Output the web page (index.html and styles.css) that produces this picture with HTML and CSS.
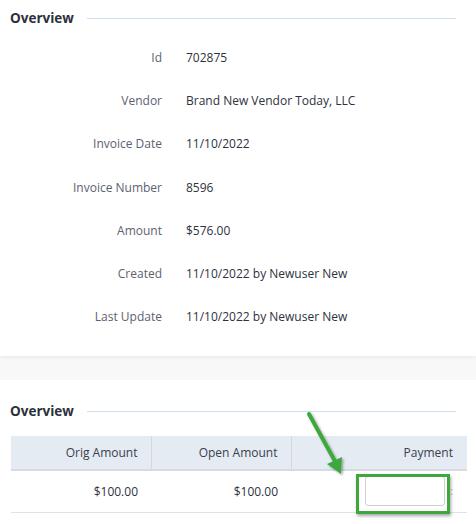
FILE: index.html
```html
<!DOCTYPE html>
<html>
<head>
<meta charset="utf-8">
<link rel="stylesheet" href="styles.css">
</head>
<body>
<div class="panel">
  <div class="section-title"><span>Overview</span><span class="rule"></span></div>
  <div class="details">
    <div class="label">Id</div><div class="value">702875</div>
    <div class="label">Vendor</div><div class="value">Brand New Vendor Today, LLC</div>
    <div class="label">Invoice Date</div><div class="value">11/10/2022</div>
    <div class="label">Invoice Number</div><div class="value">8596</div>
    <div class="label">Amount</div><div class="value">$576.00</div>
    <div class="label">Created</div><div class="value">11/10/2022 by Newuser New</div>
    <div class="label">Last Update</div><div class="value">11/10/2022 by Newuser New</div>
  </div>
</div>
<div class="band"></div>
<div class="lower">
  <div class="section-title"><span>Overview</span><span class="rule"></span></div>
  <table class="grid">
    <thead>
      <tr><th class="c1">Orig Amount</th><th class="c2">Open Amount</th><th class="c3">Payment</th></tr>
    </thead>
    <tbody>
      <tr><td>$100.00</td><td>$100.00</td><td class="pay"><input class="pay-input" type="text"><span class="dots">:</span></td></tr>
    </tbody>
  </table>
  <div class="highlight"></div>
  <svg class="arrow" width="60" height="80" viewBox="0 0 60 80">
    <defs>
      <filter id="sh" x="-50%" y="-50%" width="200%" height="200%">
        <feDropShadow dx="1.5" dy="1.5" stdDeviation="1" flood-color="#000" flood-opacity="0.35"/>
      </filter>
    </defs>
    <g filter="url(#sh)">
      <line x1="9" y1="6" x2="36" y2="55" stroke="#3ea83e" stroke-width="4" stroke-linecap="round"/>
      <polygon points="41,66 27,56 42,49" fill="#3ea83e"/>
    </g>
  </svg>
</div>
</body>
</html>
```
FILE: styles.css
```css
* { box-sizing: border-box; }
html, body { margin: 0; padding: 0; background: #fff; }
body {
  font-family: "Open Sans", "Noto Sans", sans-serif;
  font-size: 12px;
  color: #2f3440;
  width: 476px;
  height: 524px;
  overflow: hidden;
  position: relative;
}
.panel {
  background: #fff;
  height: 356px;
  box-shadow: 0 1px 5px rgba(0,0,0,0.08);
  position: relative;
  z-index: 1;
}
.section-title {
  height: 36px;
  display: flex;
  align-items: center;
  gap: 13px;
  padding: 0 20px 0 10px;
  font-weight: 700;
  font-size: 13.5px;
  color: #2b303b;
}
.rule {
  flex: 1;
  height: 1px;
  background: #cddff5;
}
.details {
  display: grid;
  grid-template-columns: 162px 1fr;
  column-gap: 24px;
  grid-auto-rows: 43.2px;
  align-items: center;
}
.label {
  text-align: right;
  color: #5c6270;
}
.value { color: #2d323d; }
.band {
  height: 24px;
  background: #f8f8f8;
}
.lower {
  padding-top: 13px;
}
.grid {
  margin: 7px 0 0 11px;
  width: 456px;
  border-collapse: collapse;
  table-layout: fixed;
}
.grid th {
  background: #e5ebf3;
  height: 34px;
  font-weight: 400;
  color: #3a404c;
  text-align: right;
  padding: 0 13px 0 0;
  border-bottom: 2px solid #d6dbe1;
  border-right: 1px solid #d4d9e0;
}
.grid th.c3 { border-right: none; padding-right: 14px; }
.grid .c1, .grid .c2 { width: 140px; }
.grid td {
  height: 42px;
  text-align: right;
  padding: 0 13px 0 0;
  border-bottom: 1px solid #e2e2e2;
  color: #2d323d;
}
.grid td.pay { padding: 0 14px 0 0; }
.pay-input {
  width: 80px;
  height: 30px;
  border: 1px solid #cfcfcf;
  border-radius: 3px;
  background: #fff;
  vertical-align: middle;
  margin: 0;
}
.dots {
  display: inline-block;
  width: 8px;
  color: #9bc27a;
  font-size: 10px;
  vertical-align: middle;
  text-align: right;
}
.highlight {
  position: absolute;
  left: 356px;
  top: 474px;
  width: 94px;
  height: 40px;
  border: 3px solid #3ea83e;
  box-shadow: 1px 2px 3px rgba(0,0,0,0.35);
}
.arrow {
  position: absolute;
  left: 300px;
  top: 408px;
}
```
